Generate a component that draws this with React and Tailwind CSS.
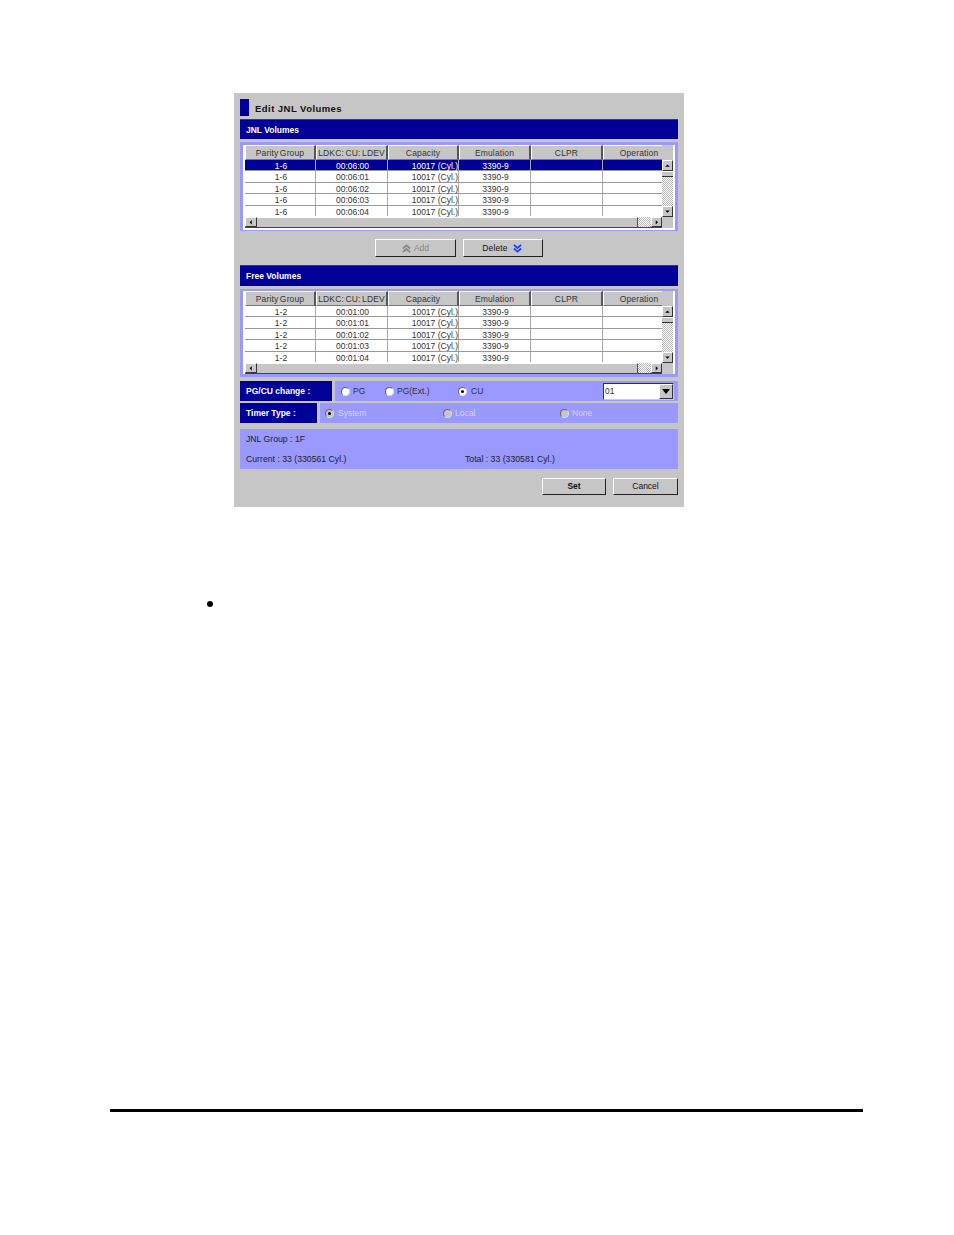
import React from "react";

const columns = [
  ["Parity Group", "w-[71px]"],
  ["LDKC: CU: LDEV", "w-[72px]"],
  ["Capacity", "w-[71px]"],
  ["Emulation", "w-[72px]"],
  ["CLPR", "w-[72px]"],
  ["Operation", "w-[59px] pl-[12px]"],
];

const dither = "bg-[repeating-conic-gradient(#b8b8b8_0_25%,#ffffff_0_50%)] bg-[length:2px_2px]";

function Arrow({ dir }) {
  const pts = {
    up: "3,7 6,4 9,7",
    down: "3,4 6,7 9,4",
    left: "7,3 4,6 7,9",
    right: "5,3 8,6 5,9",
  };
  return (
    <svg viewBox="0 0 12 11" className="w-full h-full">
      <polygon points={pts[dir]} fill="#000" />
    </svg>
  );
}

function ScrollBtn({ dir, className }) {
  return (
    <div className={`bg-[#c6c6c6] border-t border-l border-t-white border-l-white border-r border-b border-r-[#333] border-b-[#333] shrink-0 ${className}`}>
      <Arrow dir={dir} />
    </div>
  );
}

function VolumeTable({ group, ldev, selected, frame }) {
  const rows = ["00", "01", "02", "03", "04"];
  return (
    <div className={`border-l-[3px] border-r-[3px] border-[#9999ff] bg-white pl-[2px] pr-[2px] flex ${frame}`}>
      <div className="w-[417px]">
        <div className="flex h-[15px] bg-[#c6c6c6]">
          {columns.map(([name, w]) => (
            <div
              key={name}
              className={`${w} border-t border-l border-white border-r-2 border-r-[#555] border-b border-b-[#777] flex items-center justify-center pt-[1px] text-[8.5px] tracking-[0.15px] text-[#333] whitespace-nowrap [word-spacing:-1px] last:border-r-0`}
            >
              {name}
            </div>
          ))}
        </div>
        {rows.map((r, i) => {
          const on = selected && i === 0;
          const cells = [`1-${group}`, `00:0${ldev}:${r}`, "10017 (Cyl.)", "3390-9", "", ""];
          return (
            <div
              key={r}
              className={`flex h-[11.4px] border-b ${i === 4 ? "border-b-transparent" : "border-b-[#999]"} ${on ? "bg-[#000099] text-white" : "bg-white text-[#333]"}`}
            >
              {cells.map((c, j) => (
                <div
                  key={j}
                  className={`${columns[j][1]} border-r ${j === 2 ? "border-r-[#444] text-right" : "text-center pl-[2px]"} ${j === 5 ? "border-r-0" : "border-r-[#aaa]"} text-[8.5px] leading-[13px] whitespace-nowrap`}
                >
                  {c}
                </div>
              ))}
            </div>
          );
        })}
        <div className="flex h-[11px] bg-[#c6c6c6] border-b border-b-[#444]">
          <ScrollBtn dir="left" className="w-[12px]" />
          <div className="w-[381px] border-t border-t-white border-r border-r-[#555]" />
          <div className={`w-[13px] ${dither}`} />
          <ScrollBtn dir="right" className="w-[11px]" />
        </div>
      </div>
      <div className="w-[11px] flex flex-col bg-[#c6c6c6] h-[83px]">
        <div className="h-[15px] shrink-0" />
        <ScrollBtn dir="up" className="h-[11px]" />
        <div className="h-[6px] border-b border-b-[#333] border-t border-t-white shrink-0" />
        <div className={`flex-1 ${dither}`} />
        <ScrollBtn dir="down" className="h-[11px]" />
        <div className="h-[11px] shrink-0" />
      </div>
    </div>
  );
}

function Radio({ on, off, className }) {
  return (
    <span className={`inline-flex items-center justify-center w-[9px] h-[9px] rounded-full border border-[#666] border-r-[#ddd] border-b-[#ddd] shrink-0 ${off ? "bg-[#c6c6c6]" : "bg-white"} ${className || ""}`}>
      {on && <span className="w-[3px] h-[3px] rounded-full bg-black" />}
    </span>
  );
}

function Bar({ children, className }) {
  return (
    <div className={`bg-[#000099] text-white font-bold text-[8.5px] flex items-center pl-[6px] border-t border-t-[#333399] ${className}`}>
      {children}
    </div>
  );
}

function Btn({ children, className }) {
  return (
    <div className={`bg-[#c6c6c6] border border-t-white border-l-white border-r-[#222] border-b-[#222] flex items-center justify-center ${className}`}>
      {children}
    </div>
  );
}

function Chevrons({ up, color }) {
  return (
    <svg viewBox="0 0 10 10" className="w-[9px] h-[9px]" fill="none" stroke={color} strokeWidth="2">
      {up ? (
        <>
          <polyline points="1,5 5,1.5 9,5" />
          <polyline points="1,9 5,5.5 9,9" />
        </>
      ) : (
        <>
          <polyline points="1,1 5,4.5 9,1" />
          <polyline points="1,5 5,8.5 9,5" />
        </>
      )}
    </svg>
  );
}

export default function App() {
  return (
    <div className="w-[954px] h-[1235px] bg-white font-['Liberation_Sans',Arial,sans-serif] pt-[93px]">
      <div className="ml-[234px] w-[450px] h-[414px] bg-[#c6c6c6] pt-[6px] px-[6px]">
        <div className="flex h-[17px]">
          <div className="w-[9px] h-[17px] bg-[#000099]" />
          <span className="ml-[6px] pt-[3px] font-bold text-[9.5px] leading-[14px] tracking-[0.45px] text-[#111]">Edit JNL Volumes</span>
        </div>
        <div className="mt-[3px]">
          <Bar className="h-[20px] pt-[1px]">JNL Volumes</Bar>
        </div>
        <div className="mt-[3px]">
          <VolumeTable group="6" ldev="6" selected frame="border-t-[3px] border-b border-b-[#9999ff] h-[89px]" />
        </div>
        <div className="mt-[8px] flex h-[18px] ml-[135px] gap-[7px]">
          <Btn className="w-[81px] gap-[3px] text-[8.5px] text-[#888]">
            <Chevrons up color="#888" />
            <span>Add</span>
          </Btn>
          <Btn className="w-[80px] gap-[5px] pr-[2px] text-[8.5px] tracking-[0.15px] text-[#111] border-l-[#eee]">
            <span>Delete</span>
            <Chevrons color="#2040ff" />
          </Btn>
        </div>
        <div className="mt-[8px]">
          <Bar className="h-[21px]">Free Volumes</Bar>
        </div>
        <div className="mt-[3px]">
          <VolumeTable group="2" ldev="1" frame="border-t-[2px] border-b-[3px] h-[88px]" />
        </div>

        <div className="mt-[4px] flex h-[20px] gap-[3px]">
          <div className="w-[92px] bg-[#000099] text-white font-bold text-[8.5px] flex items-center pl-[6px]">PG/CU change :</div>
          <div className="flex-1 bg-[#9999ff] flex items-center text-[8.5px] text-[#333]">
            <Radio className="ml-[6px]" />
            <span className="ml-[3px] w-[32px]">PG</span>
            <Radio />
            <span className="ml-[3px] w-[61px]">PG(Ext.)</span>
            <Radio on />
            <span className="ml-[4px]">CU</span>
            <div className="ml-auto mr-[4px] w-[71px] h-[17px] bg-white border border-[#333] border-r-[#ccc] border-b-[#ccc] flex items-center pl-[1px]">
              <span className="flex-1">01</span>
              <div className="w-[14px] h-[15px] bg-[#c6c6c6] border border-t-white border-l-white border-r-[#333] border-b-[#333] flex items-center justify-center">
                <svg viewBox="0 0 8 5" className="w-[8px] h-[5px]">
                  <polygon points="0,0 8,0 4,5" fill="#000" />
                </svg>
              </div>
            </div>
          </div>
        </div>

        <div className="mt-[2px] flex h-[20px] gap-[3px]">
          <div className="w-[77px] bg-[#000099] text-white font-bold text-[8.5px] flex items-center pl-[6px]">Timer Type :</div>
          <div className="flex-1 bg-[#9999ff] flex items-center text-[8.5px] text-[#d4d4ee]">
            <div className="w-[123px] flex items-center pl-[5px]">
              <Radio on off />
              <span className="ml-[4px]">System</span>
            </div>
            <div className="w-[117px] flex items-center">
              <Radio off />
              <span className="ml-[3px]">Local</span>
            </div>
            <div className="flex items-center">
              <Radio off />
              <span className="ml-[3px]">None</span>
            </div>
          </div>
        </div>

        <div className="mt-[6px] h-[40px] bg-[#9999ff] text-[8.7px] text-[#222] pl-[6px] pt-[5px]">
          <div className="leading-[11px]">JNL Group : 1F</div>
          <div className="flex mt-[9px] leading-[11px]">
            <span className="w-[219px]">Current : 33 (330561 Cyl.)</span>
            <span>Total : 33 (330581 Cyl.)</span>
          </div>
        </div>

        <div className="mt-[9px] flex justify-end gap-[7px] h-[17px]">
          <Btn className="w-[64px] font-bold text-[8.5px] text-[#111]">Set</Btn>
          <Btn className="w-[65px] text-[8.5px] text-[#111]">Cancel</Btn>
        </div>
      </div>

      <div className="ml-[207px] mt-[94px] w-[6px] h-[6px] rounded-full bg-black" />

      <div className="ml-[110px] mt-[502px] w-[753px] h-[3px] bg-black" />
    </div>
  );
}
